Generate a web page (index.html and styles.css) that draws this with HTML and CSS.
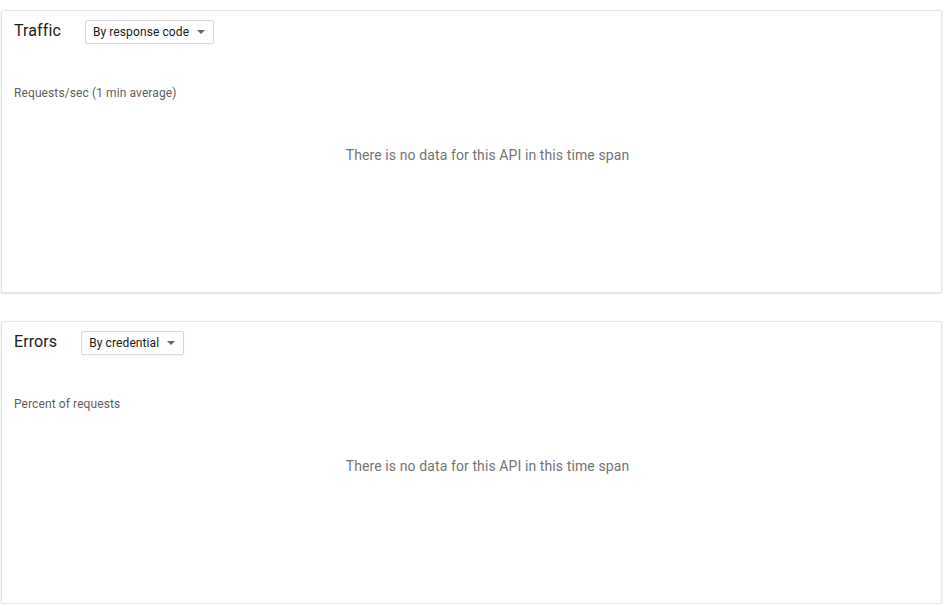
FILE: index.html
```html
<!DOCTYPE html>
<html>
<head>
<meta charset="utf-8">
<link rel="stylesheet" href="styles.css">
</head>
<body>
<div class="page">
  <section class="card">
    <div class="card-head">
      <h2 class="card-title">Traffic</h2>
      <button class="select">
        <span>By response code</span>
        <svg class="caret" width="8" height="4" viewBox="0 0 8 4"><path d="M0 0h8L4 4z" fill="#666"/></svg>
      </button>
    </div>
    <div class="metric">Requests/sec (1 min average)</div>
    <div class="empty">There is no data for this API in this time span</div>
  </section>
  <section class="card">
    <div class="card-head">
      <h2 class="card-title">Errors</h2>
      <button class="select">
        <span>By credential</span>
        <svg class="caret" width="8" height="4" viewBox="0 0 8 4"><path d="M0 0h8L4 4z" fill="#666"/></svg>
      </button>
    </div>
    <div class="metric">Percent of requests</div>
    <div class="empty">There is no data for this API in this time span</div>
  </section>
</div>
</body>
</html>
```
FILE: styles.css
```css
* { box-sizing: border-box; }
html, body { margin: 0; padding: 0; background: #fff; }
body { font-family: Roboto, "Noto Sans", Arial, sans-serif; color: #212121; letter-spacing: 0.1px; }
.page {
  display: flex;
  flex-direction: column;
  gap: 27.6px;
  padding: 10px 2px 0 1px;
}
.card {
  height: 283px;
  border: 1px solid #e6e6e6;
  border-radius: 2px;
  box-shadow: 0 1px 2px rgba(0,0,0,0.12);
  padding: 9px 12px 0 12px;
  background: #fff;
}
.card-head {
  display: flex;
  align-items: center;
  height: 24px;
}
.card-title {
  margin: 0 24px 0 0;
  font-size: 16px;
  font-weight: 400;
  line-height: 20px;
  color: #212121;
  position: relative;
  top: -1px;
}
.select {
  display: flex;
  align-items: center;
  gap: 8px;
  height: 24px;
  padding: 0 8px 0 7px;
  border: 1px solid #d9d9d9;
  border-radius: 2px;
  background: #fff;
  font-family: Roboto, "Noto Sans", Arial, sans-serif;
  font-size: 12px;
  letter-spacing: 0.1px;
  color: #212121;
  box-shadow: 0 1px 1px rgba(0,0,0,0.04);
}
.caret { display: block; }
.metric {
  margin-top: 41px;
  font-size: 12px;
  line-height: 16px;
  color: #5f5f5f;
}
.empty {
  margin-top: 44px;
  padding-left: 32px;
  text-align: center;
  font-size: 14px;
  line-height: 20px;
  color: #757575;
}
```
